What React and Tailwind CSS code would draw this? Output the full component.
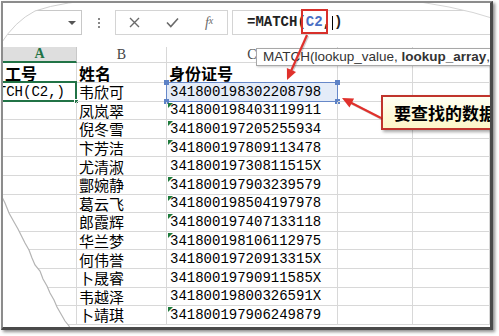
// Excel lookup screenshot: formula bar, sheet grid, tooltip and callout.

const ROWS = [
  ['韦欣可', '341800198302208798', false],
  ['凤岚翠', '341800198403119911', true],
  ['倪冬雪', '341800197205255934', true],
  ['卞芳洁', '341800197809113478', true],
  ['尤清淑', '34180019730811515X', false],
  ['酆婉静', '341800197903239579', true],
  ['葛云飞', '341800198504197978', true],
  ['郎霞辉', '341800197407133118', true],
  ['华兰梦', '341800198106112975', true],
  ['何伟誉', '34180019720913315X', false],
  ['卜晟睿', '34180019790911585X', false],
  ['韦越泽', '34180019800326591X', false],
  ['卜靖琪', '341800197906249879', true],
];

const MONO = "font-['Liberation_Mono','Noto_Sans_CJK_SC',monospace]";
const CJK = "font-['Noto_Sans_CJK_SC',sans-serif]";
const COLS = 'grid grid-cols-[74px_90px_171px_75px_77px]';
const CELL = 'border-r border-b border-[#d8d8d8] relative';

function arrowHead(x1, y1, x2, y2, len = 11, half = 5) {
  const dx = x2 - x1;
  const dy = y2 - y1;
  const d = Math.hypot(dx, dy);
  const ux = dx / d;
  const uy = dy / d;
  const bx = x2 - ux * len;
  const by = y2 - uy * len;
  return `${x2},${y2} ${bx - uy * half},${by + ux * half} ${bx + uy * half},${by - ux * half}`;
}

function Arrow({ x1, y1, x2, y2 }) {
  const d = Math.hypot(x2 - x1, y2 - y1);
  const ex = x2 - ((x2 - x1) / d) * 8;
  const ey = y2 - ((y2 - y1) / d) * 8;
  return (
    <g>
      <line x1={x1 + 1} y1={y1 + 1} x2={ex + 1} y2={ey + 1} stroke="rgba(0,0,0,0.18)" strokeWidth="2.5" />
      <line x1={x1} y1={y1} x2={ex} y2={ey} stroke="#e0312c" strokeWidth="2.2" />
      <polygon points={arrowHead(x1, y1, x2, y2)} fill="#e0312c" />
    </g>
  );
}

function Triangle() {
  return (
    <span className="absolute left-px top-px w-0 h-0 border-t-[5px] border-r-[5px] border-t-[#1e7b3c] border-r-transparent" />
  );
}

function Handle({ className }) {
  return <span className={`absolute w-[5px] h-[5px] bg-[#5d82c6] ${className}`} />;
}

function FormulaBar() {
  return (
    <div className="flex h-[25px] mt-[7px] items-stretch">
      <div className="shrink-0 -ml-[5px] w-[84px] border border-[#c8c8c8] flex items-center justify-end pr-[5px]">
        <span className="w-0 h-0 border-l-[4px] border-r-[4px] border-t-[4px] border-l-transparent border-r-transparent border-t-[#555]" />
      </div>
      <div className="shrink-0 w-[33px] flex flex-col items-center justify-center gap-[2px]">
        <span className="w-[2px] h-[2px] bg-[#888]" />
        <span className="w-[2px] h-[2px] bg-[#888]" />
        <span className="w-[2px] h-[2px] bg-[#888]" />
      </div>
      <div className="shrink-0 w-[113px] border border-[#d4d4d4] flex items-center text-[#6a6a6a]">
        <span className="w-[38px] flex justify-center">
          <svg width="11" height="11" viewBox="0 0 11 11">
            <path d="M1 1L10 10M10 1L1 10" stroke="#6a6a6a" strokeWidth="1.4" />
          </svg>
        </span>
        <span className="w-[38px] flex justify-center">
          <svg width="13" height="11" viewBox="0 0 13 11">
            <path d="M1 5.5L4.8 9.5L12 1.5" stroke="#6a6a6a" strokeWidth="1.6" fill="none" />
          </svg>
        </span>
        <span className="w-[36px] flex justify-center font-['Liberation_Serif',serif] italic text-[14px] leading-none">
          f<span className="text-[10px]">x</span>
        </span>
      </div>
      <div className={`shrink-0 ml-[4px] w-[300px] border border-[#d4d4d4] flex items-center pl-[14px] ${MONO} font-bold text-[14px] text-[#222] whitespace-nowrap`}>
        =MATCH(<span className="text-[#4a6fc4]">C2</span>,<span className="inline-block w-px h-[14px] bg-black mx-[1px]" />)
      </div>
    </div>
  );
}

function HeaderRow() {
  return (
    <div className={`${COLS} h-[16px] mt-[12px] font-['Liberation_Serif',serif] text-[14px] leading-none`}>
      <div className="bg-[#dedede] border-r border-[#c8c8c8] border-b-2 border-b-[#217346] flex items-center justify-center text-[#217346] font-bold">
        A
      </div>
      <div className="border-r border-b border-[#d8d8d8] flex items-center justify-center text-[#444]">B</div>
      <div className="border-r border-b border-[#d8d8d8] flex items-center justify-center text-[#444]">C</div>
      <div className="border-r border-b border-[#d8d8d8]" />
      <div className="border-b border-[#d8d8d8]" />
    </div>
  );
}

function TitleRow() {
  return (
    <div className={`${COLS} h-[20px] ${CJK} font-bold text-[16px] leading-none text-black`}>
      <div className={`${CELL} flex items-center pl-[2px]`}>工号</div>
      <div className={`${CELL} flex items-center pl-[2px]`}>姓名</div>
      <div className={`${CELL} flex items-center pl-[2px]`}>身份证号</div>
      <div className={CELL} />
      <div className={CELL} />
    </div>
  );
}

function DataRow({ name, id, mark, first }) {
  return (
    <div className={`${COLS} h-[18.6px] leading-none text-black`}>
      <div className={`${CELL} flex items-center justify-end pr-[11px]`}>
        {first && (
          <>
            <span className={`${MONO} text-[14px] whitespace-nowrap shrink-0`}>TCH(C2,)</span>
            <span className="absolute -left-[4px] -top-[2px] -right-px -bottom-px border-2 border-[#217346]" />
            <span className="absolute -right-[3px] -bottom-[3px] w-[5px] h-[5px] bg-[#217346] border border-white" />
          </>
        )}
      </div>
      <div className={`${CELL} flex items-center pl-[2px] ${CJK} text-[15px]`}>{name}</div>
      <div className={`${CELL} flex items-center pl-[3px] ${MONO} text-[14px]`}>
        {first && (
          <>
            <span className="absolute -left-px -top-px -right-px -bottom-px bg-[#e4ecf8] border border-[#6788c8]" />
            <Handle className="-left-[3px] -top-[3px]" />
            <Handle className="-right-[3px] -top-[3px]" />
            <Handle className="-left-[3px] -bottom-[3px]" />
            <Handle className="-right-[3px] -bottom-[3px]" />
          </>
        )}
        {mark && <Triangle />}
        <span className="relative">{id}</span>
      </div>
      <div className={CELL} />
      <div className={CELL} />
    </div>
  );
}

export default function App() {
  const torn =
    '-3,190 2,200 6,210 11,219 15,226 19,234 22,240 26,247 29,255 32,262 37,268 40,276 44,283 47,290 51,297 54,304 58,311 62,318 66,323 69,330 -3,330';
  return (
    <div className="w-[499px] h-[336px] bg-white">
      <div className="relative ml-px mt-px w-[492px] h-[329px] border-t-2 border-l-2 border-[#8c8c8c] border-r-[3px] border-b-[3px] border-r-[#4a4a4a] border-b-[#4a4a4a] shadow-[2px_2px_3px_rgba(0,0,0,0.45)] overflow-hidden bg-white">
        <FormulaBar />
        <HeaderRow />
        <TitleRow />
        {ROWS.map(([name, id, mark], i) => (
          <DataRow key={id} name={name} id={id} mark={mark} first={i === 0} />
        ))}

        {/* function tooltip */}
        <div className="absolute left-[253px] top-[45px] h-[18px] w-[260px] bg-white border border-[#a8a8a8] shadow-[1px_1px_2px_rgba(0,0,0,0.2)] flex items-center pl-[6px] font-['Liberation_Sans',sans-serif] text-[13.5px] leading-none text-[#333] whitespace-nowrap">
          MATCH(lookup_value,&nbsp;<b>lookup_array</b>, [match_type])
        </div>

        {/* callout */}
        <div className="absolute left-[378px] top-[92px] h-[35px] w-[150px] border-2 border-[#c0342c] bg-gradient-to-b from-[#fffff2] to-[#fdf6c8] shadow-[2px_2px_3px_rgba(0,0,0,0.35)] flex items-center pl-[11px]">
          <span className={`${CJK} font-bold text-[17px] text-black whitespace-nowrap leading-none`}>要查找的数据</span>
        </div>

        <svg className="absolute left-0 top-0 pointer-events-none" width="492" height="329">
          <rect x="299" y="7" width="25" height="23" fill="none" stroke="#d8302b" strokeWidth="2" />
          <Arrow x1={304} y1={32} x2={284} y2={77} />
          <Arrow x1={378} y1={115} x2={339} y2={95} />
          <path d="M-3,42 Q12,18 32,8 Q60,-2 110,-4 L-3,-4 Z" fill="white" />
          <path d="M-3,42 Q12,18 32,8 Q60,-2 110,-4" fill="none" stroke="#d0d0d0" strokeWidth="1" />
          <path d="M392,-4 Q450,2 492,16 L492,-4 Z" fill="white" />
          <path d="M392,-4 Q450,2 492,16" fill="none" stroke="#d6d6d6" strokeWidth="1" />
          <polygon points={torn} fill="white" />
          <polyline points={torn.split(' ').slice(0, -1).join(' ')} fill="none" stroke="#b4b4b4" strokeWidth="1.2" />
        </svg>
      </div>
    </div>
  );
}
